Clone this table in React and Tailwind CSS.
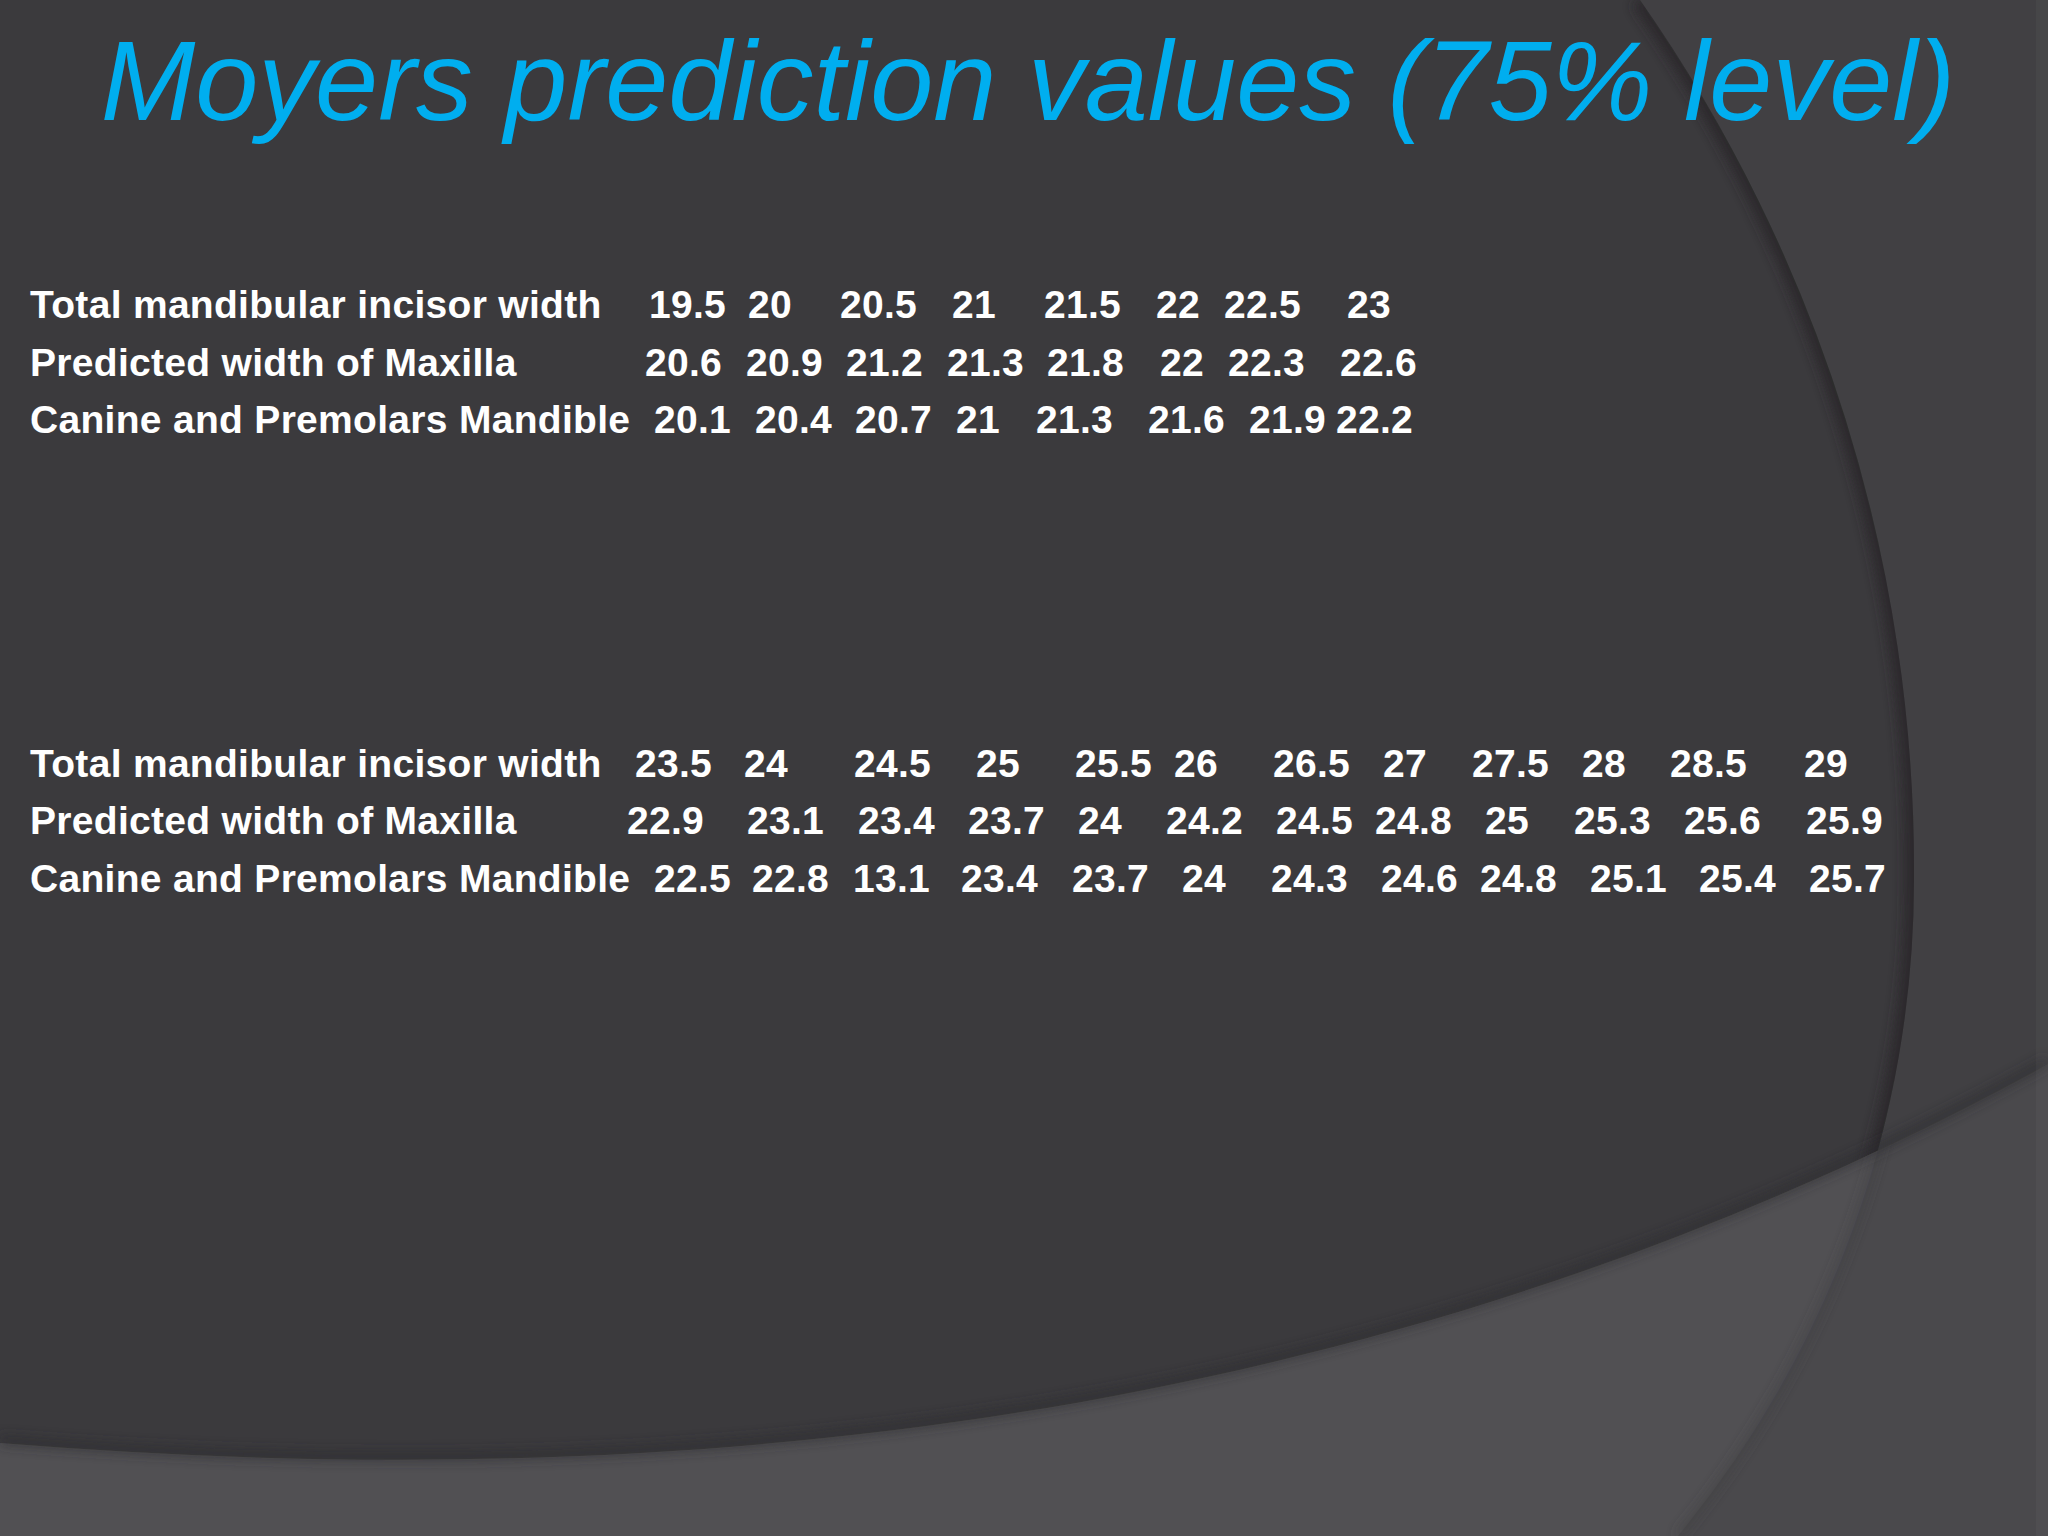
import React from 'react';

const labels = [
  'Total mandibular incisor width',
  'Predicted width of Maxilla',
  'Canine and Premolars Mandible',
];

// first block: values plus the x where each one starts
const blockOne = [
  { values: ['19.5', '20', '20.5', '21', '21.5', '22', '22.5', '23'], starts: [649, 748, 840, 952, 1044, 1156, 1224, 1347] },
  { values: ['20.6', '20.9', '21.2', '21.3', '21.8', '22', '22.3', '22.6'], starts: [645, 746, 846, 947, 1047, 1160, 1228, 1340] },
  { values: ['20.1', '20.4', '20.7', '21', '21.3', '21.6', '21.9', '22.2'], starts: [654, 755, 855, 956, 1036, 1148, 1249, 1336] },
];

const blockTwo = [
  { values: ['23.5', '24', '24.5', '25', '25.5', '26', '26.5', '27', '27.5', '28', '28.5', '29'], starts: [635, 744, 854, 976, 1075, 1174, 1273, 1383, 1472, 1582, 1670, 1804] },
  { values: ['22.9', '23.1', '23.4', '23.7', '24', '24.2', '24.5', '24.8', '25', '25.3', '25.6', '25.9'], starts: [627, 747, 858, 968, 1078, 1166, 1276, 1375, 1485, 1574, 1684, 1806] },
  { values: ['22.5', '22.8', '13.1', '23.4', '23.7', '24', '24.3', '24.6', '24.8', '25.1', '25.4', '25.7'], starts: [654, 752, 853, 961, 1072, 1182, 1271, 1381, 1480, 1590, 1699, 1809] },
];

const LEFT = 30;

const Row = ({ label, values, starts }) => (
  <div className="flex whitespace-nowrap leading-[57.5px] h-[57.5px]">
    <span className="shrink-0" style={{ width: starts[0] - LEFT }}>{label}</span>
    {values.map((v, i) => (
      <span
        key={i}
        className="shrink-0"
        style={{ width: i < values.length - 1 ? starts[i + 1] - starts[i] : 'auto' }}
      >
        {v}
      </span>
    ))}
  </div>
);

const ARC = 'M1640,0 A1518,1518 0 0 1 1914,880 A1030,1030 0 0 1 1678,1536';

const Backdrop = () => (
  <svg className="absolute inset-0 w-full h-full" viewBox="0 0 2048 1536" preserveAspectRatio="none">
    <defs>
      <clipPath id="inside">
        <path d="M0,0 L1640,0 A1518,1518 0 0 1 1914,880 A1030,1030 0 0 1 1678,1536 L0,1536 Z" />
      </clipPath>
      <clipPath id="band">
        <path d="M0,1443 C700,1500 1400,1420 2048,1064 L2048,1536 L0,1536 Z" />
      </clipPath>
      <filter id="soft" x="-10%" y="-10%" width="120%" height="120%">
        <feGaussianBlur stdDeviation="6" />
      </filter>
    </defs>
    <rect width="2048" height="1536" fill="#414043" />
    <rect width="2048" height="1536" fill="#3b3a3d" clipPath="url(#inside)" />
    {/* shadow along the big arc, inside edge */}
    <g clipPath="url(#inside)">
      <path d={ARC} fill="none" stroke="#29282b" strokeWidth="18" filter="url(#soft)" opacity="0.85" />
    </g>
    {/* lower band */}
    <rect width="2048" height="1536" fill="#4a494c" clipPath="url(#band)" />
    <g clipPath="url(#band)">
      <rect width="2048" height="1536" fill="#515053" clipPath="url(#inside)" />
      <path d={ARC} fill="none" stroke="#3d3c3f" strokeWidth="4" filter="url(#soft)" />
    </g>
    {/* shadow above the band edge */}
    <path
      d="M0,1440 C700,1497 1400,1417 2048,1061"
      fill="none"
      stroke="#2c2b2e"
      strokeWidth="8"
      filter="url(#soft)"
      opacity="0.7"
    />
    <rect x="2036" y="0" width="12" height="1536" fill="#ffffff" opacity="0.03" />
  </svg>
);

export default function App() {
  return (
    <div className="relative w-full h-[1536px] overflow-hidden bg-[#3b3a3d] font-['Liberation_Sans',Arial,sans-serif]">
      <Backdrop />
      <div className="relative">
        <h1 className="pt-[16px] pl-[8px] h-[146px] text-center text-[113.5px] leading-[130px] italic font-normal text-[#00aeef] whitespace-nowrap">
          Moyers prediction values (75% level)
        </h1>
        <div className="pl-[30px] text-white font-bold text-[39px] tracking-[0.3px]">
          <div className="mt-[130px]">
            {blockOne.map((r, i) => (
              <Row key={i} label={labels[i]} values={r.values} starts={r.starts} />
            ))}
          </div>
          <div className="mt-[286px]">
            {blockTwo.map((r, i) => (
              <Row key={i} label={labels[i]} values={r.values} starts={r.starts} />
            ))}
          </div>
        </div>
      </div>
    </div>
  );
}
